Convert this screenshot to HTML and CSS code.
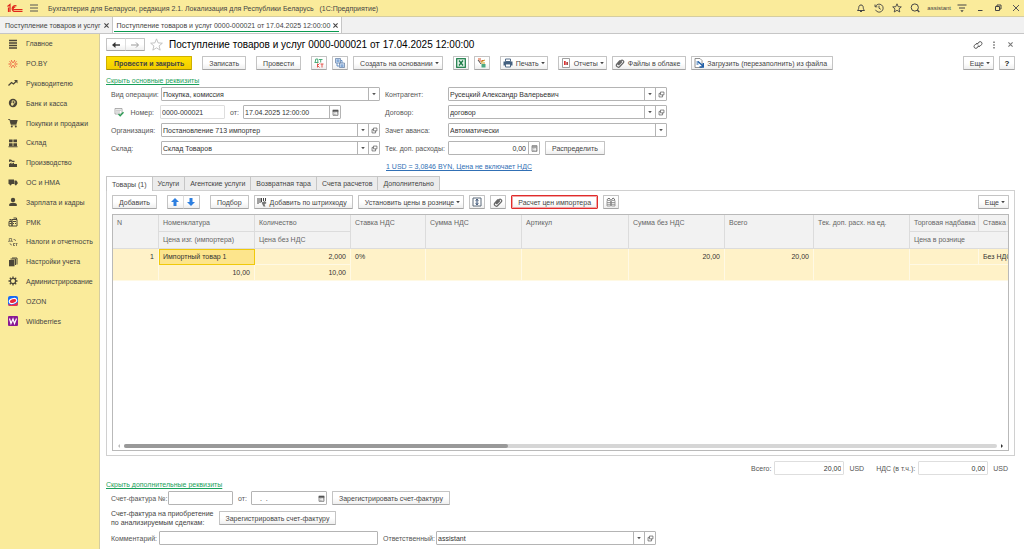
FILE: index.html
```html
<!DOCTYPE html>
<html lang="ru">
<head>
<meta charset="utf-8">
<title>Поступление товаров и услуг</title>
<link rel="stylesheet" href="styles.css">
</head>
<body>
<svg class="sprite" aria-hidden="true">
  <symbol id="i-down" viewBox="0 0 10 10"><path d="M2 3.500h6L5 7z" fill="currentColor"/></symbol>
  <symbol id="i-open" viewBox="0 0 10 10"><path d="M3.500 1.500h5v4h-5zM3.500 3.500h-2v5h5v-3" fill="none" stroke="currentColor"/></symbol>
  <symbol id="i-cal" viewBox="0 0 10 10"><path d="M1.500 2h7v7h-7z" fill="none" stroke="currentColor"/><path d="M1 1h8v3H1zM3 5h1v1H3zM5 5h1v1H5zM7 5h1v1H7zM3 7h1v1H3zM5 7h1v1H5z" fill="currentColor"/></symbol>
  <symbol id="i-calc" viewBox="0 0 10 10"><path d="M1.500 1h7v8h-7z" fill="none" stroke="currentColor"/><path d="M2 2h6v1.500H2zM3 5h1v1H3zM5 5h1v1H5zM7 5h1v1H7zM3 7h1v1H3zM5 7h1v1H5zM7 7h1v1H7z" fill="currentColor"/></symbol>
  <symbol id="i-clip" viewBox="0 0 10 10"><path d="M2.500 6.500l3.500-4a1.700 1.700 0 0 1 2.500 2.200L4.800 8.500a1.900 1.900 0 0 1-2.900-2.600L5 2.500M3.500 7.200L7 3.500" fill="none" stroke="currentColor" stroke-width="1.200"/></symbol>
  <symbol id="i-x" viewBox="0 0 10 10"><path d="M2 2l6 6M8 2l-6 6" fill="none" stroke="currentColor" stroke-width="1.500"/></symbol>
</svg>
<div class="app">
  <header class="titlebar">
    <svg class="logo" viewBox="0 0 16 10"><g fill="none" stroke="#e0261c" stroke-width="1.200"><path d="M.5 3.500L3 1.500V9M1.500 4.500V9"/><path d="M9.500 3A3 3 0 1 0 7 8.500H15.500"/><path d="M8.300 4.200A1.400 1.400 0 1 0 7 6.700H15.500"/></g></svg>
    <button class="bare" aria-label="Меню"><svg class="ic" viewBox="0 0 10 10"><path d="M1 2h8M1 5h8M1 8h8" stroke="#555"/></svg></button>
    <span class="app-name">Бухгалтерия для Беларуси, редакция 2.1. Локализация для Республики Беларусь &nbsp; (1С:Предприятие)</span>
    <div class="window-tools">
      <button class="bare" aria-label="Уведомления"><svg class="ic" viewBox="0 0 10 10"><path d="M1.500 7.500C3 6 2.500 5 3 3.300 3.500 1.500 6.500 1.500 7 3.300 7.500 5 7 6 8.500 7.500zM4 8.200q1 1 2 0" fill="none" stroke="#444"/></svg></button>
      <button class="bare" aria-label="История"><svg class="ic" viewBox="0 0 10 10"><path d="M1.500 3.500A4 4 0 1 1 1.500 6.800M1 1.500v2.300h2.300M5 2.700V5.200L6.800 6.300" fill="none" stroke="#444" stroke-width=".9"/></svg></button>
      <button class="bare" aria-label="Избранное"><svg class="ic" viewBox="0 0 10 10"><path d="M5 .8l1.200 2.900 3.100.2L7 5.900l.8 3.100L5 7.300 2.200 9l.8-3.100L.7 3.900l3.100-.2z" fill="none" stroke="#444" stroke-width=".9"/></svg></button>
      <button class="bare" aria-label="Поиск"><svg class="ic" viewBox="0 0 10 10"><circle cx="4.800" cy="4.500" r="3.600" fill="none" stroke="#444"/><path d="M7.300 7L9.300 9" stroke="#444" stroke-width="1.300"/></svg></button>
      <span class="user">assistant</span>
      <button class="bare" aria-label="Настройки"><svg class="ic" viewBox="0 0 10 10"><path d="M.5 2h9M2 5h6" stroke="#444"/><path d="M3.300 7.300h3.400L5 9.300z" fill="#444"/></svg></button>
      <button class="bare win" aria-label="Свернуть"><svg class="ic" viewBox="0 0 10 10"><path d="M3 7.500h4.500" stroke="#444"/></svg></button>
      <button class="bare win" aria-label="Развернуть"><svg class="ic" viewBox="0 0 10 10"><path d="M2.500 3.500h4v4h-4zM4 3V2h4v4H7" fill="none" stroke="#444"/></svg></button>
      <button class="bare win" aria-label="Закрыть"><svg class="ic" viewBox="0 0 10 10"><path d="M2 2l6 6M8 2l-6 6" stroke="#555"/></svg></button>
    </div>
  </header>

  <nav class="doc-tabs">
    <a class="doc-tab" href="#">Поступление товаров и услуг<svg class="tiny"><use href="#i-x"/></svg></a>
    <a class="doc-tab doc-tab-on" href="#">Поступление товаров и услуг 0000-000021 от 17.04.2025 12:00:00<svg class="tiny"><use href="#i-x"/></svg></a>
  </nav>

  <div class="body">
    <nav class="sidebar">
      <div class="menu">
      <a href="#"><svg class="ic" viewBox="0 0 10 10"><path d="M1 1.500h8M1 4h8M1 6.500h8M1 9h8" stroke="#4b4638" stroke-width="1.300"/></svg>Главное</a>
      <a href="#"><svg class="ic" viewBox="0 0 10 10"><path d="M3.800 5H.5M6.200 5H9.500M4.500 3.800L3.300 1.200M5.500 3.800L6.700 1.200M4.500 6.200L3.300 8.800M5.500 6.200L6.700 8.800M1.500 2.500l1.300 1M8.500 2.500l-1.300 1M1.500 7.500l1.300-1M8.500 7.500l-1.300-1" stroke="#ec5a3a"/></svg>PO.BY</a>
      <a href="#"><svg class="ic" viewBox="0 0 10 10"><path d="M.5 7.500L3.500 4.500 5.500 6 8.500 3" fill="none" stroke="#4b4638" stroke-width="1.300"/><path d="M6 2h3.500v3.500z" fill="#4b4638"/></svg>Руководителю</a>
      <a href="#"><svg class="ic" viewBox="0 0 10 10"><circle cx="5" cy="5" r="4.200" fill="#4b4638"/><path d="M4.200 8V2.800h1.500a1.200 1.200 0 0 1 0 2.600H3M3 6.600h2.800" fill="none" stroke="#faeb9b" stroke-width=".9"/></svg>Банк и касса</a>
      <a href="#"><svg class="ic" viewBox="0 0 10 10"><path d="M.3 1.500h1.500l1.500 5.300h5.200" fill="none" stroke="#4b4638"/><path d="M2 2h7.700L8.500 6H3z" fill="#4b4638"/><circle cx="3.800" cy="8.500" r="1" fill="#4b4638"/><circle cx="7.800" cy="8.500" r="1" fill="#4b4638"/></svg>Покупки и продажи</a>
      <a href="#"><svg class="ic" viewBox="0 0 10 10"><path d="M1 1.500h3.600v2.800H1zM5.400 1.500H9v2.800H5.400zM1 5.200h3.600V8H1zM5.400 5.200H9V8H5.400zM.5 8.300h9v1h-9z" fill="#4b4638"/></svg>Склад</a>
      <a href="#"><svg class="ic" viewBox="0 0 10 10"><path d="M1 9V6l2.500-1.500V6L6 4.500V6h3v3zM1 4V1.500h2l1.500 1.200h2V4h-2L3 3.200z" fill="#4b4638"/></svg>Производство</a>
      <a href="#"><svg class="ic" viewBox="0 0 10 10"><path d="M.5 2.500H6V7H.5zM6.400 3.500h2l1.200 1.800V7H6.400z" fill="#4b4638"/><circle cx="2.500" cy="7.300" r="1.100" fill="#4b4638"/><circle cx="7.800" cy="7.300" r="1.100" fill="#4b4638"/></svg>ОС и НМА</a>
      <a href="#"><svg class="ic" viewBox="0 0 10 10"><circle cx="5" cy="3" r="2.200" fill="#4b4638"/><path d="M1.200 9V7.500Q1.500 6 5 5.800 8.500 6 8.800 7.500V9z" fill="#4b4638"/></svg>Зарплата и кадры</a>
      <a href="#"><svg class="ic" viewBox="0 0 10 10"><path d="M1 4.500h3v4.500H1zM4 2.500h5V9H4zM5.500 1h3v1.500" fill="none" stroke="#4b4638"/><path d="M5 4h3v1H5zM5 6h1v1H5zM7 6h1v1H7zM1.500 6h2v1h-2zM1.500 2h2v1.500h-2z" fill="#4b4638"/></svg>РМК</a>
      <a href="#"><svg class="ic" viewBox="0 0 10 10"><path d="M.7 4.200h3.600M1.300 4V1.500h2.300V4M.7 4v.9M4.300 4v.9M5.500 6v3M5.500 7.500L7 6M5.500 7.500L7 9M7.500 6.500h2M8.500 6.500v2.500M5.500 2.500q2-.5 2.200 1.500M4 8Q2 8 2 6.200" fill="none" stroke="#6b6450" stroke-width=".8"/></svg>Налоги и отчетность</a>
      <a href="#"><svg class="ic" viewBox="0 0 10 10"><path d="M1 3h5.500v6.300H1z" fill="#4b4638"/><path d="M2.500 2h5v6M4 1h5v6.500" fill="none" stroke="#4b4638"/></svg>Настройки учета</a>
      <a href="#"><svg class="ic" viewBox="0 0 10 10"><circle cx="5" cy="5" r="2.600" fill="none" stroke="#4b4638" stroke-width="1.200"/><path d="M5 .5v1.700M5 7.800v1.700M.5 5h1.700M7.800 5h1.700M1.800 1.800L3 3M7 7l1.200 1.200M8.200 1.800L7 3M3 7L1.800 8.200" stroke="#4b4638" stroke-width="1.300"/></svg>Администрирование</a>
      <a href="#"><svg class="ic" viewBox="0 0 10 10"><rect width="10" height="10" rx="2" fill="#1769f5"/><path d="M0 8Q6 10 10 6V8a2 2 0 0 1-2 2H2a2 2 0 0 1-2-2z" fill="#f0304a"/><ellipse cx="5" cy="5" rx="3.800" ry="2.400" transform="rotate(-18 5 5)" fill="#e9243c" stroke="#fff" stroke-width="1.100"/></svg>OZON</a>
      <a href="#"><svg class="ic" viewBox="0 0 10 10"><rect width="10" height="10" rx="1" fill="#8a1a94"/><path d="M1.500 2.500L3 7.500 5 3 6.500 7.500 8.500 2.500" fill="none" stroke="#fff" stroke-width="1.200"/></svg>Wildberries</a>
      </div>
    </nav>

    <main class="main">
      <div class="head">
        <div class="pair">
          <button class="btn" aria-label="Назад"><svg class="ic" viewBox="0 0 10 10"><path d="M9 5H3" stroke="#333" stroke-width="1.400"/><path d="M4.500 2L1 5l3.500 3z" fill="#333"/></svg></button>
          <button class="btn" aria-label="Вперед"><svg class="ic" viewBox="0 0 10 10"><path d="M1 5h7M6 2.500L8.500 5 6 7.500" fill="none" stroke="#999"/></svg></button>
        </div>
        <svg class="star" viewBox="0 0 12 12"><path d="M6 .8l1.500 3.700 3.900.3-3 2.500 1 3.900L6 9.100l-3.400 2.100 1-3.900-3-2.500 3.900-.3z" fill="none" stroke="#bbb" stroke-width=".8"/></svg>
        <h1>Поступление товаров и услуг 0000-000021 от 17.04.2025 12:00:00</h1>
        <div class="head-tools">
          <button class="bare" aria-label="Ссылка"><svg class="ic" viewBox="0 0 10 10"><path d="M4 4.500l1.800-2.300q1.500-1.200 2.700 0 1 1.200 0 2.500L7 6.200Q5.800 7 4.800 6M5.800 5.500L4.200 7.800q-1.500 1.200-2.700 0-1-1.200 0-2.500L3 3.800Q4.200 3 5.200 4" fill="none" stroke="#555"/></svg></button>
          <button class="bare" aria-label="Дополнительно"><svg class="ic" viewBox="0 0 10 10"><path d="M4.300 1.500h1.400V3H4.300zM4.300 4.300h1.400v1.400H4.300zM4.300 7h1.400v1.500H4.300z" fill="#666"/></svg></button>
          <button class="bare dim" aria-label="Закрыть"><svg class="tiny"><use href="#i-x"/></svg></button>
        </div>
      </div>

      <div class="toolbar">
        <button class="btn btn-main">Провести и закрыть</button>
        <button class="btn gap">Записать</button>
        <button class="btn gap">Провести</button>
        <button class="btn sq gap" aria-label="Дт Кт"><svg class="ic" viewBox="0 0 10 10"><path d="M.5 4.500h4M1.200 4.200L1.800 1h2v3.200M5 1.500h3.500M6.700 1.500V4.500" fill="none" stroke="#3ba36b" stroke-width=".9"/><path d="M3.500 5.500v4M3.500 7.500l2-2M3.500 7.500l2 2M6.500 6h3M8 6v3.500" fill="none" stroke="#e2463c" stroke-width=".9"/></svg></button>
        <button class="btn sq" aria-label="Структура подчиненности"><svg class="ic" viewBox="0 0 10 10"><path d="M.5 .5h5v4.500h-5zM4.500 5h5v4.500h-5z" fill="#dceafb" stroke="#6d87a8" stroke-width=".8"/><path d="M1.500 2h3M1.500 3.200h3M5.500 7h3M5.500 8.200h3M2 5v3h2M7 5V2.500H6" fill="none" stroke="#4179bd" stroke-width=".8"/></svg></button>
        <button class="btn">Создать на основании<svg class="dd"><use href="#i-down"/></svg></button>
        <button class="btn sq gap" aria-label="Excel"><svg class="ic" viewBox="0 0 10 10"><rect x=".7" y=".7" width="8.600" height="8.600" fill="#e4f4ea" stroke="#187a45" stroke-width="1.200"/><path d="M3 2.500l4 5M7 2.500l-4 5" stroke="#187a45" stroke-width="1.300"/></svg></button>
        <button class="btn sq" aria-label="Заполнить"><svg class="ic" viewBox="0 0 10 10"><path d="M1 1h3M2 3h3M5 2.500h2" stroke="#d4542d"/><path d="M4 4l4-2M4 5h4" stroke="#c99b21"/><path d="M4.500 6h4v3.500h-4z" fill="#4ba982"/><path d="M1 2l3 4" stroke="#555"/></svg></button>
        <button class="btn btn-icon gap"><svg class="ic" viewBox="0 0 10 10"><path d="M2.500 1h5v2.500h-5z" fill="#fff" stroke="#44607f" stroke-width=".9"/><path d="M.5 3.500h9v4h-9z" fill="#44607f"/><path d="M2.500 6h5v3h-5z" fill="#fff" stroke="#44607f" stroke-width=".9"/></svg>Печать<svg class="dd"><use href="#i-down"/></svg></button>
        <button class="btn btn-icon gap"><svg class="ic" viewBox="0 0 10 10"><path d="M1.500 .5h7v9h-7z" fill="#fff" stroke="#888" stroke-width=".8"/><path d="M3 3h1.700v4H3z" fill="#d33"/><path d="M5.300 4H7v3H5.300z" fill="#a44"/></svg>Отчеты<svg class="dd"><use href="#i-down"/></svg></button>
        <button class="btn btn-icon"><svg class="ic grey"><use href="#i-clip"/></svg>Файлы в облаке</button>
        <button class="btn btn-icon"><svg class="ic" viewBox="0 0 10 10"><path d="M1 .5h5l2 2V9.500H1z" fill="#fff" stroke="#777" stroke-width=".8"/><path d="M2.500 3h2v4h-2z" fill="#86a8ce"/><path d="M4 3.500l5 4.500M9.300 5v4H5.500" fill="none" stroke="#1e5ea8" stroke-width="1.400"/></svg>Загрузить (перезаполнить) из файла</button>
        <span class="grow"></span>
        <button class="btn">Еще<svg class="dd"><use href="#i-down"/></svg></button>
        <button class="btn sq help">?</button>
      </div>

      <a class="toggle" href="#">Скрыть основные реквизиты</a>

      <div class="form">
        <div class="col">
          <div class="row"><label for="op">Вид операции:</label><div class="field"><select id="op"><option>Покупка, комиссия</option></select><span class="fb"><svg class="dd"><use href="#i-down"/></svg></span></div></div>
          <div class="row"><label class="num" for="num"><svg class="ic" viewBox="0 0 10 10"><path d="M1 1.500h7v5.500H1z" fill="#fff" stroke="#999" stroke-width=".8"/><path d="M2 3.200h5M2 5h4" stroke="#aaa" stroke-width=".8"/><path d="M4.500 7l1.700 1.700L9.500 5.300" fill="none" stroke="#2c9c55" stroke-width="1.400"/></svg>Номер:</label><div class="field light w-num"><input id="num" value="0000-000021"></div><label class="from" for="date">от:</label><div class="field w-date"><input id="date" value="17.04.2025 12:00:00"><button class="fb" aria-label="Календарь"><svg class="fi"><use href="#i-cal"/></svg></button></div></div>
          <div class="row"><label for="org">Организация:</label><div class="field"><input id="org" value="Постановление 713 импортер"><button class="fb" aria-label="Выбрать"><svg class="dd"><use href="#i-down"/></svg></button><button class="fb" aria-label="Открыть"><svg class="fi"><use href="#i-open"/></svg></button></div></div>
          <div class="row"><label for="store">Склад:</label><div class="field"><input id="store" value="Склад Товаров"><button class="fb" aria-label="Выбрать"><svg class="dd"><use href="#i-down"/></svg></button><button class="fb" aria-label="Открыть"><svg class="fi"><use href="#i-open"/></svg></button></div></div>
        </div>
        <div class="col col-right">
          <div class="row"><label for="agent">Контрагент:</label><div class="field"><input id="agent" value="Русецкий Александр Валерьевич"><button class="fb" aria-label="Выбрать"><svg class="dd"><use href="#i-down"/></svg></button><button class="fb" aria-label="Открыть"><svg class="fi"><use href="#i-open"/></svg></button></div></div>
          <div class="row"><label for="deal">Договор:</label><div class="field"><input id="deal" value="договор"><button class="fb" aria-label="Выбрать"><svg class="dd"><use href="#i-down"/></svg></button><button class="fb" aria-label="Открыть"><svg class="fi"><use href="#i-open"/></svg></button></div></div>
          <div class="row"><label for="adv">Зачет аванса:</label><div class="field"><select id="adv"><option>Автоматически</option></select><span class="fb"><svg class="dd"><use href="#i-down"/></svg></span></div></div>
          <div class="row"><label for="cost">Тек. доп. расходы:</label><div class="field w-cost"><input class="r" id="cost" value="0,00"><button class="fb" aria-label="Калькулятор"><svg class="fi"><use href="#i-calc"/></svg></button></div><button class="btn spread">Распределить</button></div>
          <a class="rate" href="#">1 USD = 3,0846 BYN, Цена не включает НДС</a>
        </div>
      </div>

      <div class="tabs" role="tablist">
        <button class="tab tab-on" role="tab">Товары (1)</button><button class="tab" role="tab">Услуги</button><button class="tab" role="tab">Агентские услуги</button><button class="tab" role="tab">Возвратная тара</button><button class="tab" role="tab">Счета расчетов</button><button class="tab" role="tab">Дополнительно</button>
      </div>
      <section class="panel">
        <div class="toolbar">
          <button class="btn">Добавить</button>
          <div class="pair gap">
            <button class="btn" aria-label="Вверх"><svg class="ic" viewBox="0 0 10 10"><path d="M5 1l4 4H6.500v4h-3V5H1z" fill="#2d7fe0"/></svg></button>
            <button class="btn" aria-label="Вниз"><svg class="ic" viewBox="0 0 10 10"><path d="M5 9l4-4H6.500V1h-3v4H1z" fill="#2d7fe0"/></svg></button>
          </div>
          <button class="btn gap">Подбор</button>
          <button class="btn btn-icon"><svg class="ic" viewBox="0 0 10 10"><path d="M1 1v6M3 1v5M4.500 1v4M6.500 1v3M8.500 1v3" stroke="#444"/><path d="M4.500 5.500L8 4l1.500 2-2 1.500L8.500 9.500H6.500L5.500 7.500z" fill="#777"/></svg>Добавить по штрихкоду</button>
          <button class="btn">Установить цены в рознице<svg class="dd"><use href="#i-down"/></svg></button>
          <button class="btn sq" aria-label="Высота строк"><svg class="ic" viewBox="0 0 10 10"><path d="M1 1h8v8H1z" fill="#fff" stroke="#5a6878"/><path d="M5 2.500v5M3.500 3.700L5 2.300l1.500 1.400M3.500 6.300L5 7.700l1.500-1.400" fill="none" stroke="#223e66"/></svg></button>
          <button class="btn sq" aria-label="Файлы"><svg class="ic grey"><use href="#i-clip"/></svg></button>
          <button class="btn btn-red">Расчет цен импортера</button>
          <button class="btn sq" aria-label="Колонки"><svg class="ic" viewBox="0 0 10 10"><path d="M1 3.500h3.500V9H1zM5.500 3.500H9V9H5.500zM1 5.500h8M1 7.300h8" fill="none" stroke="#888" stroke-width=".8"/><path d="M1 2.800L2.800 1 4.500 2.800M5.500 2.800L7.200 1 9 2.800" fill="none" stroke="#555"/></svg></button>
          <span class="grow"></span>
          <button class="btn">Еще<svg class="dd"><use href="#i-down"/></svg></button>
        </div>
        <div class="grid">
          <div class="grid-view">
            <table>
              <colgroup><col class="c-n"><col class="c-m"><col class="c-m"><col class="c-rate"><col class="c-m"><col class="c-art"><col class="c-m"><col class="c-total"><col class="c-m"><col class="c-s"><col class="c-s"></colgroup>
              <thead>
                <tr><th rowspan="2">N</th><th>Номенклатура</th><th>Количество</th><th rowspan="2">Ставка НДС</th><th rowspan="2">Сумма НДС</th><th rowspan="2">Артикул</th><th rowspan="2">Сумма без НДС</th><th rowspan="2">Всего</th><th rowspan="2">Тек. доп. расх. на ед.</th><th>Торговая надбавка</th><th>Ставка НДС</th></tr>
                <tr><th>Цена изг. (импортера)</th><th>Цена без НДС</th><th colspan="2">Цена в рознице</th></tr>
              </thead>
              <tbody>
                <tr><td class="r" rowspan="2">1</td><td class="sel">Импортный товар 1</td><td class="r">2,000</td><td rowspan="2">0%</td><td rowspan="2"></td><td rowspan="2"></td><td class="r" rowspan="2">20,00</td><td class="r" rowspan="2">20,00</td><td rowspan="2"></td><td></td><td>Без НДС</td></tr>
                <tr><td class="r">10,00</td><td class="r">10,00</td><td colspan="2"></td></tr>
              </tbody>
            </table>
          </div>
          <div class="scroll">
            <svg class="arrow" viewBox="0 0 4 6"><path d="M3 1v4L1 3z" fill="#bbb"/></svg>
            <div class="track"><div class="thumb"></div></div>
            <svg class="arrow" viewBox="0 0 4 6"><path d="M1 1v4l2-2z" fill="#333"/></svg>
          </div>
        </div>
      </section>

      <div class="totals">
        <label for="sum">Всего:</label><div class="field light w-sum"><input class="r" id="sum" value="20,00"></div><span class="cur">USD</span>
        <label class="vat" for="vat">НДС (в т.ч.):</label><div class="field light w-sum"><input class="r" id="vat" value="0,00"></div><span class="cur">USD</span>
      </div>

      <a class="toggle" href="#">Скрыть дополнительные реквизиты</a>

      <div class="extra">
        <div class="row"><label class="auto" for="inv">Счет-фактура №:</label><div class="field w-inv"><input id="inv"></div><label class="from" for="invd">от:</label><div class="field w-invd"><input id="invd" value="  .  ."><button class="fb noline" aria-label="Календарь"><svg class="fi"><use href="#i-cal"/></svg></button></div><button class="btn reg">Зарегистрировать счет-фактуру</button></div>
        <div class="row two"><span>Счет-фактура на приобретение<br>по анализируемым сделкам:</span><button class="btn reg">Зарегистрировать счет-фактуру</button></div>
        <div class="row"><label for="note">Комментарий:</label><div class="field w-note"><input id="note"></div><label class="resp" for="resp">Ответственный:</label><div class="field w-resp"><input id="resp" value="assistant"><button class="fb" aria-label="Выбрать"><svg class="dd"><use href="#i-down"/></svg></button><button class="fb" aria-label="Открыть"><svg class="fi"><use href="#i-open"/></svg></button></div></div>
      </div>
    </main>
  </div>
</div>
</body>
</html>
```

FILE: styles.css
```css
* { box-sizing: border-box; }
body { margin: 0; background: #fff; color: #444; font: 7px/9px "Liberation Sans", Arial, sans-serif; }
button, input, select { margin: 0; padding: 0; color: inherit; font: inherit; }
a { color: inherit; text-decoration: none; }
svg { display: block; flex: none; }
.sprite { position: absolute; width: 0; height: 0; }
.ic { width: 10px; height: 10px; }
.tiny { width: 7px; height: 7px; }
.dd { width: 6px; height: 6px; }
.fi { width: 7px; height: 7px; }
.grey { color: #666; }
.dim { color: #777; }
.bare { display: flex; align-items: center; justify-content: center; min-width: 10px; border: 0; background: none; }
.grow { flex: 1; }
.r { text-align: right; }

.app { display: flex; flex-direction: column; height: 100vh; overflow: hidden; }

.titlebar { display: flex; align-items: center; flex: none; height: 17px; padding: 0 3px 0 7px; background: #faeb9b; border-bottom: 1px solid #d5cda0; }
.logo { width: 16px; height: 10px; margin-right: 6px; }
.app-name { margin-left: 9px; white-space: nowrap; }
.window-tools { display: flex; align-items: center; gap: 8px; margin-left: auto; }
.user { margin: 0 -2px 0 -1px; font-size: 6px; }

.doc-tabs { display: flex; flex: none; height: 17px; background: #f1f1f1; border-bottom: 1px solid #c6c6c6; }
.doc-tab { display: flex; align-items: center; gap: 2px; padding: 0 2px 0 5px; border-right: 1px solid #c6c6c6; white-space: nowrap; }
.doc-tab-on { position: relative; padding-left: 4px; background: #fff; }
.doc-tab-on::after { content: ""; position: absolute; right: 2px; bottom: 1px; left: 1px; height: 1px; background: #0a9a50; }

.body { display: flex; flex: 1; min-height: 0; }
.sidebar { flex: none; width: 100px; background: #faeb9b; border-right: 1px solid #d5cda0; }
.menu { display: grid; grid-auto-rows: 1fr; height: 297px; }
.menu a { display: flex; align-items: center; gap: 8px; padding-left: 8px; white-space: nowrap; }

.main { display: flex; flex: 1; flex-direction: column; min-width: 0; padding: 4px 9px 4px 6px; }
.head { display: flex; align-items: center; flex: none; height: 13px; }
.head h1 { margin: 0 0 0 6px; color: #000; font-size: 10px; font-weight: 400; line-height: 13px; white-space: nowrap; }
.head-tools { display: flex; gap: 6px; margin-left: auto; }
.star { width: 13px; height: 13px; margin-left: 5px; }

.btn { display: flex; align-items: center; justify-content: center; flex: none; gap: 3px; height: 14px; padding: 0 6px; background: linear-gradient(#fff 50%, #efefef); border: 1px solid #c4c4c4; border-bottom-color: #a5a5a5; border-radius: 1px; white-space: nowrap; }
.btn .dd { margin: 0 -4px 0 -2px; }
.btn-main { padding: 0 7px; background: linear-gradient(#ffe100, #f2cd00); border-color: #cfb000; border-bottom-color: #a38b00; font-weight: 700; }
.btn-icon { padding: 0 5px 0 2px; }
.btn-red { border: 1px solid #e02b2b; outline: 1px solid #f2a5a5; outline-offset: -2px; }
.sq { width: 16px; padding: 0; }
.help { color: #222; font-size: 8px; font-weight: 700; }
.pair { display: flex; }
.pair .btn { width: 20px; height: 13px; padding: 0; }
.pair .btn + .btn { border-left-color: #ddd; margin-left: -1px; }
.toolbar { display: flex; align-items: center; flex: none; gap: 5px; }
.toolbar .gap { margin-left: 5px; }
.toolbar .pair .btn { width: 17px; height: 14px; }
.head + .toolbar { margin-top: 5px; }

.toggle { align-self: flex-start; flex: none; margin-top: 6px; color: #1ba15c; text-decoration: underline; }
.totals + .toggle { margin-top: 5px; }

.form { display: flex; flex: none; margin: 2px 0 0 5px; }
.col { display: flex; flex-direction: column; flex: 0 1 269px; gap: 4px; }
.col-right { flex-basis: 287px; padding-left: 5px; }
.row { display: flex; align-items: center; min-height: 14px; }
.row label { flex: none; width: 50px; color: #555; white-space: nowrap; }
.col-right .row label { width: 63px; }
.row .num { display: flex; align-items: center; justify-content: space-between; padding: 0 6px 0 3px; width: 49px; }
.row .from { width: 13px; margin-left: 5px; }
.field { display: flex; flex: 1; height: 14px; min-width: 0; background: #fff; border: 1px solid #b4b4b4; border-radius: 1px; color: #333; }
.field input, .field select { flex: 1; width: 0; min-width: 0; padding: 0 2px 0 1px; border: 0; background: none; outline: 0; appearance: none; }
.field.light { border-color: #dedede; }
.fb { display: flex; align-items: center; justify-content: center; flex: none; width: 11px; border: 0; border-left: 1px solid #b4b4b4; background: none; color: #555; }
.noline { border-left-color: transparent; }
.w-num { flex: 0 0 65px; }
.w-date { flex: 0 0 98px; }
.w-cost { flex: 0 0 92px; }
.spread { margin-left: 5px; }
.rate { align-self: flex-start; margin: 3px 0 0 1px; color: #3170b5; text-decoration: underline; }

.tabs { display: flex; flex: none; margin-top: 5px; }
.tab { height: 14px; margin-right: -1px; padding: 0 5px; background: #ececec; border: 1px solid #c6c6c6; border-bottom: 0; white-space: nowrap; }
.tab-on { position: relative; z-index: 1; height: 15px; margin-bottom: -1px; background: #fff; }

.panel { display: flex; flex: 1; flex-direction: column; min-height: 0; padding: 4px 5px; border: 1px solid #d0d0d0; }
.grid { display: flex; flex: 1; flex-direction: column; min-height: 0; margin-top: 5px; border: 1px solid #b9b9b9; }
.grid-view { flex: 1; min-height: 0; overflow: hidden; }
table { width: 934px; border-collapse: separate; border-spacing: 0; table-layout: fixed; }
.c-n { width: 46px; }
.c-m { width: 96px; }
.c-rate { width: 75px; }
.c-art { width: 107px; }
.c-total { width: 89px; }
.c-s { width: 69px; }
th, td { padding: 3px 4px; vertical-align: top; text-align: left; white-space: nowrap; overflow: hidden; font-weight: 400; }
th { height: 17px; background: #f2f2f2; border-right: 1px solid #dcdcdc; border-bottom: 1px solid #dcdcdc; color: #666; }
td { height: 15px; background: #fff2c8; border-right: 1px solid #fff9e4; border-bottom: 1px solid #fff9e4; color: #333; }
td.r { text-align: right; }
td.sel { padding: 2px 3px; background: #fde58c; border: 1px solid #f0c90a; }
.scroll { display: flex; align-items: center; flex: none; gap: 3px; height: 8px; padding: 0 4px; }
.arrow { width: 4px; height: 6px; }
.track { flex: 1; height: 4px; border-radius: 2px; background: #d6d6d6; }
.thumb { width: 44%; height: 4px; border-radius: 2px; background: #999; }

.totals { display: flex; align-items: center; justify-content: flex-end; flex: none; margin: 5px 7px 0 0; color: #555; }
.totals label { margin-right: 3px; }
.totals .vat { margin-left: 12px; }
.cur { margin-left: 5px; }
.w-sum { flex: 0 0 70px; }

.extra { display: flex; flex: none; flex-direction: column; gap: 4px; margin: 2px 0 0 5px; }
.extra .row .auto { width: 57px; }
.w-inv { flex: 0 0 65px; }
.w-invd { flex: 0 0 76px; }
.w-invd input { white-space: pre; padding-left: 4px; }
.reg { margin-left: 5px; }
.two { min-height: 18px; }
.extra .row label[for="note"] { width: 48px; }
.w-note { flex: 0 0 219px; }
.extra .row .resp { width: 53px; margin-left: 5px; }
.w-resp { flex: 0 0 220px; }
```
